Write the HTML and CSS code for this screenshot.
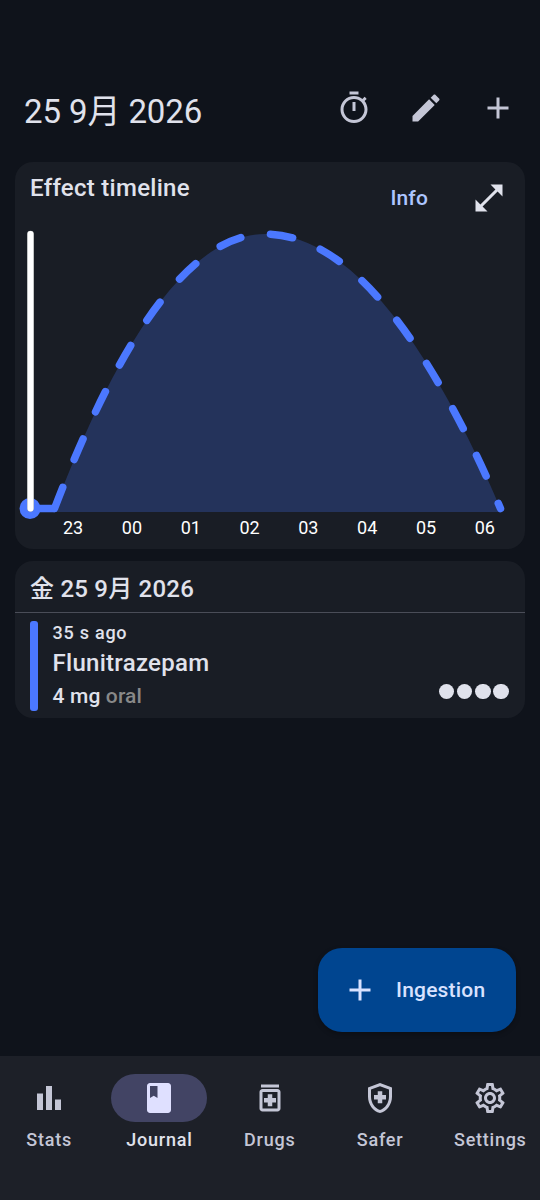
FILE: index.html
```html
<!DOCTYPE html>
<html lang="ja">
<head>
<meta charset="utf-8">
<title>Journal</title>
<link rel="stylesheet" href="styles.css">
</head>
<body>
<div class="app">
  <header class="topbar">
    <h1 class="title">25 9月 2026</h1>
    <div class="actions">
      <svg class="icon" viewBox="0 0 24 24"><path d="M9 1h6v2H9zM11 8h2v6h-2zM19.03 7.39l1.42-1.42c-.43-.51-.9-.99-1.41-1.41l-1.42 1.42C16.07 4.74 14.12 4 12 4c-4.97 0-9 4.03-9 9s4.02 9 9 9 9-4.03 9-9c0-2.12-.74-4.07-1.97-5.61zM12 20c-3.87 0-7-3.13-7-7s3.13-7 7-7 7 3.13 7 7-3.13 7-7 7z"/></svg>
      <svg class="icon" viewBox="0 0 24 24"><path d="M3 17.25V21h3.75L17.81 9.94l-3.75-3.75L3 17.25zM20.71 7.04c.39-.39.39-1.02 0-1.41l-2.34-2.34c-.39-.39-1.02-.39-1.41 0l-1.83 1.83 3.75 3.75 1.83-1.83z"/></svg>
      <svg class="icon" viewBox="0 0 24 24"><path d="M19 13h-6v6h-2v-6H5v-2h6V5h2v6h6v2z"/></svg>
    </div>
  </header>

  <section class="card timeline">
    <div class="timeline-head">
      <h2 class="card-title">Effect timeline</h2>
      <div class="timeline-actions">
        <a class="info">Info</a>
        <svg class="icon icon-expand" viewBox="0 0 24 24"><path d="M21 11V3h-8l3.29 3.29-10 10L3 13v8h8l-3.29-3.29 10-10z"/></svg>
      </div>
    </div>
    <svg class="chart" viewBox="15 228 510 290">
      <path class="area" d="M53 512L54.5 508.5Q159.500 234 265 234Q382.500 234 500.500 508.500L502 512Z"/>
      <circle class="dose" cx="30" cy="508.500" r="10.500"/>
      <path class="onset" d="M30 508.500H54.500"/>
      <path class="curve" d="M54.500 508.500Q159.500 234 265 234Q382.500 234 500.500 508.500"/>
      <path class="now-edge" d="M30.500 234V508.500"/>
      <path class="now" d="M30.500 234V508.500"/>
    </svg>
    <div class="axis">
      <span>23</span><span>00</span><span>01</span><span>02</span><span>03</span><span>04</span><span>05</span><span>06</span>
    </div>
  </section>

  <section class="card entries">
    <h2 class="day">金 25 9月 2026</h2>
    <div class="entry">
      <div class="bar"></div>
      <div class="entry-text">
        <div class="ago">35 s ago</div>
        <div class="drug">Flunitrazepam</div>
        <div class="dosage">4 mg <span class="route">oral</span></div>
      </div>
      <div class="dots"><i></i><i></i><i></i><i></i></div>
    </div>
  </section>

  <div class="fab-row">
    <button class="fab">
      <svg class="icon" viewBox="0 0 24 24"><path d="M19 13h-6v6h-2v-6H5v-2h6V5h2v6h6v2z"/></svg>
      <span>Ingestion</span>
    </button>
  </div>

  <nav class="nav">
    <div class="nav-item">
      <div class="pill"><svg class="icon" viewBox="0 0 24 24"><path d="M4 9h4v11H4zM16 13h4v7h-4zM10 4h4v16h-4z"/></svg></div>
      <span>Stats</span>
    </div>
    <div class="nav-item active">
      <div class="pill"><svg class="icon" viewBox="0 0 24 24"><path d="M18 2H6c-1.100 0-2 .9-2 2v16c0 1.100.9 2 2 2h12c1.100 0 2-.9 2-2V4c0-1.100-.9-2-2-2zM6 4h5v8l-2.500-1.500L6 12V4z"/></svg></div>
      <span>Journal</span>
    </div>
    <div class="nav-item">
      <div class="pill"><svg class="icon" viewBox="0 0 24 24"><path fill-rule="evenodd" d="M6 3h12v2H6zM17 6H7c-1.100 0-2 .9-2 2v11c0 1.100.9 2 2 2h10c1.100 0 2-.9 2-2V8c0-1.100-.9-2-2-2zM17 19H7V8h10zM10.500 9.500h3V12H16v3h-2.500v2.500h-3V15H8v-3h2.500z"/></svg></div>
      <span>Drugs</span>
    </div>
    <div class="nav-item">
      <div class="pill"><svg class="icon" viewBox="0 0 24 24"><path fill-rule="evenodd" d="M10.500 13H8v-3h2.500V7.500h3V10H16v3h-2.500v2.500h-3V13zM12 2L4 5v6.090c0 5.050 3.410 9.760 8 10.910 4.590-1.150 8-5.860 8-10.910V5l-8-3zM18 11.090c0 4-2.550 7.700-6 8.830-3.450-1.130-6-4.820-6-8.830v-4.700l6-2.250 6 2.250v4.700z"/></svg></div>
      <span>Safer</span>
    </div>
    <div class="nav-item">
      <div class="pill"><svg class="icon" viewBox="0 0 24 24"><path d="M19.430 12.980c.04-.32.070-.64.070-.98 0-.34-.03-.66-.07-.98l2.110-1.650c.19-.15.240-.42.120-.64l-2-3.460c-.09-.16-.26-.25-.44-.25-.06 0-.12.010-.17.030l-2.490 1c-.52-.4-1.080-.73-1.690-.98l-.38-2.650C14.460 2.180 14.250 2 14 2h-4c-.25 0-.46.180-.49.420l-.38 2.650c-.61.250-1.170.590-1.690.98l-2.490-1c-.06-.02-.12-.03-.18-.03-.17 0-.34.090-.43.250l-2 3.460c-.13.220-.07.490.120.640l2.110 1.650c-.04.320-.07.650-.07.980 0 .33.030.66.070.98l-2.110 1.650c-.19.150-.24.420-.12.640l2 3.460c.09.160.26.250.44.250.06 0 .12-.01.170-.03l2.490-1c.52.400 1.080.730 1.690.980l.38 2.650c.03.240.24.420.49.420h4c.25 0 .46-.18.490-.42l.38-2.650c.61-.25 1.170-.59 1.690-.98l2.490 1c.06.020.12.030.180.030.17 0 .34-.09.430-.25l2-3.460c.12-.22.070-.49-.12-.64l-2.110-1.650zm-1.980-1.710c.04.310.050.520.050.730 0 .21-.02.430-.05.730l-.14 1.130.89.700 1.080.840-.7 1.210-1.270-.51-1.040-.42-.9.680c-.43.320-.84.560-1.250.730l-1.060.430-.16 1.130-.2 1.350h-1.400l-.19-1.350-.16-1.130-1.060-.43c-.43-.18-.83-.41-1.230-.71l-.91-.7-1.060.430-1.270.510-.7-1.210 1.080-.84.890-.7-.14-1.130c-.03-.31-.05-.54-.05-.74s.02-.43.050-.73l.14-1.130-.89-.7-1.080-.84.700-1.210 1.270.510 1.040.420.900-.68c.43-.32.840-.56 1.250-.73l1.060-.43.160-1.130.2-1.350h1.390l.19 1.350.16 1.130 1.060.43c.43.180.83.410 1.230.710l.91.700 1.060-.43 1.270-.51.700 1.210-1.070.85-.89.700.14 1.130zM12 8c-2.210 0-4 1.790-4 4s1.790 4 4 4 4-1.790 4-4-1.790-4-4-4zm0 6c-1.100 0-2-.9-2-2s.9-2 2-2 2 .9 2 2-.9 2-2 2z"/></svg></div>
      <span>Settings</span>
    </div>
  </nav>
</div>
</body>
</html>
```

FILE: styles.css
```css
* { box-sizing: border-box; }

body {
  margin: 0;
  background: #0f131b;
  color: #e0e2ec;
  font-family: Roboto, "Noto Sans CJK JP", sans-serif;
}

.app {
  display: flex;
  flex-direction: column;
  width: 540px;
  height: 1200px;
  overflow: hidden;
}

h1, h2 { margin: 0; }

.icon {
  display: block;
  width: 36px;
  height: 36px;
  fill: currentColor;
}

.topbar {
  display: flex;
  align-items: center;
  justify-content: space-between;
  height: 96px;
  margin-top: 60px;
  padding: 0 24px;
}

.title {
  padding-top: 7px;
  font-size: 33px;
  line-height: 42px;
  font-weight: 400;
  letter-spacing: -0.1px;
}

.actions {
  display: flex;
  gap: 36px;
  color: #c4c6d6;
}

.card {
  margin: 0 15px;
  border-radius: 18px;
  background: #191d25;
  overflow: hidden;
}

.timeline {
  height: 386.5px;
  margin-top: 6px;
  flex: none;
}

.timeline-head {
  display: flex;
  justify-content: space-between;
  height: 66px;
  padding: 0 18px 0 15px;
}

.card-title {
  padding-top: 8px;
  font-size: 24px;
  line-height: 36px;
  font-weight: 500;
  letter-spacing: 0.28px;
}

.timeline-actions {
  display: flex;
  align-items: center;
  gap: 43px;
  padding-top: 6px;
}

.info {
  color: #adc6ff;
  font-size: 21px;
  font-weight: 500;
  letter-spacing: 0.15px;
}

.chart {
  display: block;
  width: 510px;
  height: 290px;
  overflow: visible;
}

.area { fill: #24335b; }
.dose { fill: #4b78ff; }
.onset, .curve, .now, .now-edge { fill: none; stroke-width: 7.5; }
.onset { stroke: #4b78ff; }
.curve {
  stroke: #4b78ff;
  stroke-linecap: round;
  stroke-dasharray: 22.5 30;
}
.now, .now-edge { stroke: #fff; stroke-width: 6; stroke-linecap: round; }
.now-edge { stroke: #a0a4a4; stroke-width: 6.6; }

.axis {
  display: flex;
  justify-content: space-between;
  margin-top: -2px;
  padding: 0 30px 0 48px;
  color: #fff;
  font-size: 18px;
  line-height: 24px;
}

.entries {
  height: 157px;
  margin-top: 12.5px;
  flex: none;
}

.day {
  height: 52px;
  padding: 10px 15px 0;
  border-bottom: 1px solid #4a4d58;
  font-size: 24px;
  line-height: 36px;
  font-weight: 500;
  letter-spacing: 0.22px;
}

.entry {
  display: flex;
  height: 105px;
  padding: 8px 16px 7px 15px;
}

.bar {
  width: 8px;
  border-radius: 3px;
  background: #4b78ff;
}

.entry-text { margin-left: 14.5px; flex: 1; }

.ago {
  font-size: 18px;
  line-height: 24px;
  font-weight: 500;
  letter-spacing: 0.75px;
}

.drug {
  font-size: 24px;
  line-height: 36px;
  font-weight: 500;
  letter-spacing: 0.28px;
}

.dosage {
  font-size: 21px;
  line-height: 30px;
  font-weight: 500;
  letter-spacing: 0.15px;
}

.route { color: #888; }

.dots {
  display: flex;
  gap: 2.7px;
  align-self: flex-end;
  padding: 0 0.4px 12px 0;
}

.dots i {
  width: 15.4px;
  height: 15.4px;
  border-radius: 50%;
  background: #e0e2ec;
}

.fab-row {
  display: flex;
  justify-content: flex-end;
  margin-top: auto;
  padding: 0 24px 24px 0;
}

.fab {
  display: flex;
  align-items: center;
  gap: 18px;
  width: 198px;
  height: 84px;
  padding: 0 24px;
  border: 0;
  border-radius: 24px;
  background: #004590;
  color: #d8e2ff;
  font: 500 21px Roboto, sans-serif;
  letter-spacing: 0.2px;
  box-shadow: 0 2px 5px #0004;
}

.nav {
  display: grid;
  grid-template-columns: repeat(5, 1fr);
  gap: 12px;
  height: 144px;
  flex: none;
  padding-top: 18px;
  background: #1d2028;
  color: #c4c6d6;
}

.nav-item {
  display: flex;
  flex-direction: column;
  align-items: center;
  gap: 6px;
  font-size: 18px;
  line-height: 24px;
  font-weight: 500;
  letter-spacing: 0.75px;
}

.pill {
  display: grid;
  place-items: center;
  width: 96px;
  height: 48px;
  border-radius: 24px;
}

.nav { padding-right: 0.5px; }
.active { color: #e0e2ec; }
.active .pill { background: #424464; color: #dfe0ff; }
```
